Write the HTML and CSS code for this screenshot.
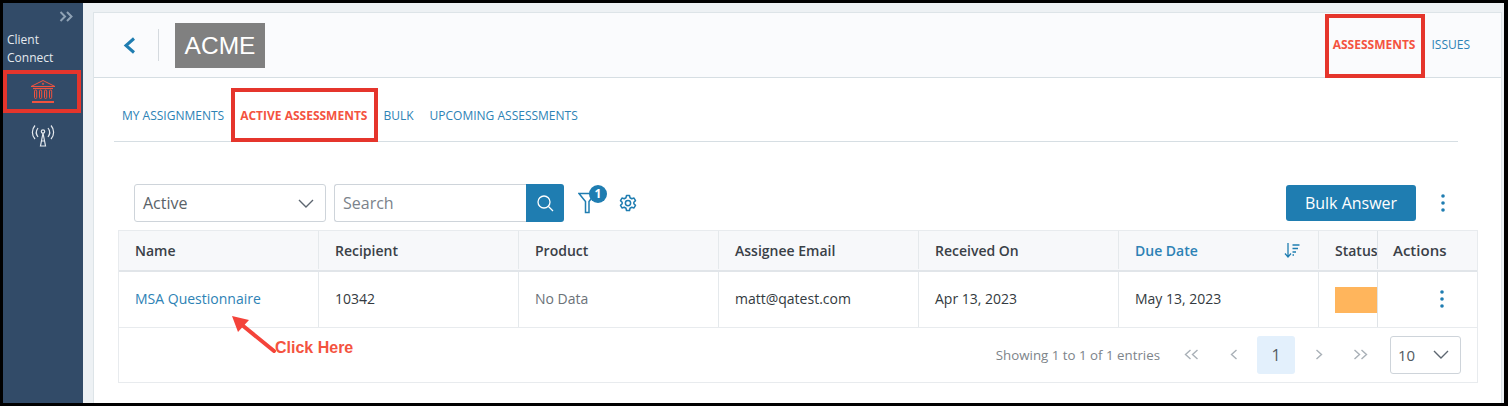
FILE: index.html
```html
<!DOCTYPE html>
<html lang="en">
<head>
<meta charset="utf-8">
<title>Client Connect</title>
<link rel="stylesheet" href="styles.css">
</head>
<body>
<div class="app">
  <aside class="sidebar">
    <div class="expand">
      <svg width="15" height="11" viewBox="0 0 15 11" fill="none" stroke="#8fa2b5" stroke-width="2"><path d="M1.500 1l4.500 4.500-4.500 4.500M8 1l4.500 4.500L8 10"/></svg>
    </div>
    <div class="brand">Client<br>Connect</div>
    <div class="side-item side-active">
      <svg width="26" height="25" viewBox="0 0 26 25" fill="none" stroke="#f0533f" stroke-width="1"><path d="M1 7.500L13 1.500l12 6z"/><circle cx="13" cy="4.800" r=".7"/><path d="M3 9.500h20" stroke-width="1.200"/><rect x="4.500" y="11" width="2.200" height="8.500" rx="1.100"/><rect x="9.500" y="11" width="2.200" height="8.500" rx="1.100"/><rect x="14.500" y="11" width="2.200" height="8.500" rx="1.100"/><rect x="19.500" y="11" width="2.200" height="8.500" rx="1.100"/><path d="M2 23h22" stroke-width="2"/></svg>
    </div>
    <div class="side-item">
      <svg width="24" height="24" viewBox="0 0 24 24" fill="none" stroke="#e4e9ee" stroke-width="1.200"><path d="M4 2.500C.500 6.500.500 12 4 16M20 2.500c3.500 4 3.500 9.500 0 13.500M7 5c-2.200 2.800-2.200 6.200 0 9M17 5c2.200 2.800 2.200 6.200 0 9M12 10L9.500 23h5zM10.500 18h3"/><circle cx="12" cy="8.500" r="1.700"/></svg>
    </div>
  </aside>
  <main class="main">
    <section class="card">
      <header class="topbar">
        <a class="back" href="#"><svg width="13" height="17" viewBox="0 0 13 17" fill="none" stroke="#1f7db1" stroke-width="3"><path d="M11 1.500L3 8.500l8 7"/></svg></a>
        <span class="vline"></span>
        <div class="logo">ACME</div>
        <nav class="topnav">
          <a class="nav-on" href="#">ASSESSMENTS</a>
          <a href="#">ISSUES</a>
        </nav>
      </header>
      <div class="content">
        <nav class="tabs">
          <a href="#">MY ASSIGNMENTS</a>
          <a class="nav-on" href="#">ACTIVE ASSESSMENTS</a>
          <a href="#">BULK</a>
          <a href="#">UPCOMING ASSESSMENTS</a>
        </nav>
        <div class="toolbar">
          <div class="select">
            <span>Active</span>
            <svg width="16" height="9" viewBox="0 0 16 9" fill="none" stroke="#5d6670" stroke-width="1.400"><path d="M1 1l7 7 7-7"/></svg>
          </div>
          <div class="search">
            <span class="search-input">Search</span>
            <span class="search-btn"><svg width="18" height="18" viewBox="0 0 18 18" fill="none" stroke="#fff" stroke-width="1.300"><circle cx="8" cy="8" r="6"/><path d="M12.500 12.500L17 17"/></svg></span>
          </div>
          <div class="filter">
            <svg width="18" height="22" viewBox="0 0 18 22" fill="none" stroke="#1f7db1" stroke-width="1.500"><path d="M1 1.500h16l-6 8V20.500H7.500V9.500z"/></svg>
            <span class="badge">1</span>
          </div>
          <svg class="gear" width="18" height="18" viewBox="0 0 24 24" fill="none" stroke="#1f7db1" stroke-width="2" stroke-linejoin="round"><circle cx="12" cy="12" r="3.500"/><path d="M10 2h4l.7 3 2.300 1.300 3-.9 2 3.400-2.200 2.100v2.200l2.200 2.100-2 3.400-3-.9-2.300 1.300-.7 3h-4l-.7-3-2.300-1.300-3 .9-2-3.400 2.200-2.100v-2.200L2 8.800l2-3.400 3 .9 2.300-1.300z"/></svg>
          <button class="bulk" type="button">Bulk Answer</button>
          <svg class="kebab" width="4" height="18" viewBox="0 0 4 18" fill="#1f7db1"><circle cx="2" cy="2" r="1.800"/><circle cx="2" cy="9" r="1.800"/><circle cx="2" cy="16" r="1.800"/></svg>
        </div>
        <div class="table">
          <div class="row head">
            <div class="cell">Name</div>
            <div class="cell">Recipient</div>
            <div class="cell">Product</div>
            <div class="cell">Assignee Email</div>
            <div class="cell">Received On</div>
            <div class="cell sorted"><span>Due Date</span>
              <svg width="16" height="16" viewBox="0 0 16 16" fill="none" stroke="#1f7db1" stroke-width="1.300"><path d="M4 1v13.500M1 11.500l3 3.500 3-3.500M8.500 3h7M8.500 6.500h5.500M8.500 10h3.500M8.500 13h1.500"/></svg>
            </div>
            <div class="cell status">Status</div>
            <div class="cell actions">Actions</div>
          </div>
          <div class="row body">
            <div class="cell"><a href="#">MSA Questionnaire</a></div>
            <div class="cell">10342</div>
            <div class="cell muted">No Data</div>
            <div class="cell">matt@qatest.com</div>
            <div class="cell">Apr 13, 2023</div>
            <div class="cell">May 13, 2023</div>
            <div class="cell status"><span class="pill"></span></div>
            <div class="cell actions action-kebab"><svg width="4" height="18" viewBox="0 0 4 18" fill="#1f7db1"><circle cx="2" cy="2" r="1.800"/><circle cx="2" cy="9" r="1.800"/><circle cx="2" cy="16" r="1.800"/></svg></div>
          </div>
          <div class="pager">
            <span class="entries">Showing 1 to 1 of 1 entries</span>
            <svg class="pg" width="15" height="11" viewBox="0 0 15 11" fill="none" stroke="#a9b0b7" stroke-width="1.400"><path d="M6.500 1L1.500 5.500l5 4.500M13.500 1l-5 4.500 5 4.500"/></svg>
            <svg class="pg pg-prev" width="8" height="11" viewBox="0 0 8 11" fill="none" stroke="#a9b0b7" stroke-width="1.400"><path d="M6.500 1l-5 4.500 5 4.500"/></svg>
            <span class="page-on">1</span>
            <svg class="pg pg-next" width="8" height="11" viewBox="0 0 8 11" fill="none" stroke="#a9b0b7" stroke-width="1.400"><path d="M1.500 1l5 4.500-5 4.500"/></svg>
            <svg class="pg pg-last" width="15" height="11" viewBox="0 0 15 11" fill="none" stroke="#a9b0b7" stroke-width="1.400"><path d="M1.500 1l5 4.500-5 4.500M8.500 1l5 4.500-5 4.500"/></svg>
            <div class="size"><span>10</span><svg width="16" height="9" viewBox="0 0 16 9" fill="none" stroke="#5d6670" stroke-width="1.400"><path d="M1 1l7 7 7-7"/></svg></div>
          </div>
        </div>
      </div>
    </section>
  </main>
  <div class="mark mark-side"></div>
  <div class="mark mark-nav"></div>
  <div class="mark mark-tab"></div>
  <svg class="arrow" width="52" height="40" viewBox="0 0 52 40"><path d="M43 36L11 10" stroke="#f4433a" stroke-width="4" stroke-linecap="round"/><path d="M1 1l17 4-11 12z" fill="#f4433a"/></svg>
  <div class="click">Click Here</div>
</div>
</body>
</html>
```

FILE: styles.css
```css
* { box-sizing: border-box; }
html, body { margin: 0; height: 100%; }
body { background: #000; padding: 3px 4px 3px 3px; overflow: hidden; font-family: "Open Sans", "Liberation Sans", sans-serif; color: #333a40; font-size: 14px; }
a { color: #2d82b5; text-decoration: none; }

.app { display: flex; height: 400px; }

.sidebar { position: relative; width: 80px; flex: none; background: #324b68; display: flex; flex-direction: column; color: #e4e9ee; }
.expand { display: flex; justify-content: flex-end; padding: 8px 9px 0 0; height: 28px; }
.brand { font-size: 12px; line-height: 18px; padding-left: 4px; height: 39px; }
.side-item { display: flex; justify-content: center; height: 43px; align-items: center; }
.side-active { color: #f0533f; }

.main { flex: 1; background: #edf1f4; padding: 9px 2px 0 10px; display: flex; min-width: 0; }
.card { flex: 1; background: #fff; border: 1px solid #dde4e8; border-bottom: 0; display: flex; flex-direction: column; min-width: 0; }

.topbar { height: 65px; background: #fafbfd; border-bottom: 1px solid #d6dee3; display: flex; align-items: center; padding: 0 31px 0 29px; flex: none; }
.back { display: flex; }
.vline { width: 1px; height: 32px; background: #d5dadf; margin: 0 16px 0 22px; }
.logo { width: 90px; height: 45px; background: #808080; color: #fff; font: 24.500px/45px "Liberation Sans", sans-serif; text-align: center; }
.topnav { margin-left: auto; display: flex; gap: 16px; font-size: 12px; margin-top: -1px; }
.nav-on { color: #f4533f; font-weight: 700; }

.content { padding: 0 20px; flex: 1; min-height: 0; position: relative; }

.tabs { display: flex; gap: 16px; height: 64px; padding: 28px 0 0 8px; font-size: 12px; line-height: 20px; border-bottom: 1px solid #d6dee3; margin-right: 23px; }

.toolbar { display: flex; align-items: center; height: 38px; margin: 42px 0 8px; padding-left: 20px; width: 1344px; }
.select { width: 192px; height: 38px; border: 1px solid #ced4da; border-radius: 3px; display: flex; align-items: center; justify-content: space-between; padding: 0 11px 0 8px; font-size: 16px; color: #5a6268; }
.search { display: flex; margin-left: 8px; height: 38px; }
.search-input { width: 192px; border: 1px solid #ced4da; border-right: 0; border-radius: 3px 0 0 3px; padding-left: 8px; font-size: 16px; line-height: 36px; color: #7b838b; }
.search-btn { width: 38px; background: #1f7db1; border-radius: 0 3px 3px 0; display: flex; align-items: center; justify-content: center; }
.filter { position: relative; margin-left: 14px; display: flex; }
.badge { position: absolute; left: 11px; top: -7px; width: 18px; height: 18px; border-radius: 50%; background: #1f7db1; color: #fff; font-size: 12px; font-weight: 700; line-height: 18px; text-align: center; }
.gear { margin-left: 23px; }
.bulk { margin-left: auto; width: 130px; height: 36px; background: #1f7db1; border: 0; border-radius: 3px; color: #fff; font: 500 16px "Open Sans", sans-serif; }
.kebab { margin: 0 13px 0 25px; }

.table { width: 1360px; border: 1px solid #e8ebee; margin-left: 4px; }
.row { display: grid; grid-template-columns: 200px 200px 200px 200px 200px 200px 59px 99px; }
.cell { display: flex; align-items: center; padding-left: 16px; border-right: 1px solid #e5e9ec; min-width: 0; white-space: nowrap; overflow: hidden; }
.cell:last-child { border-right: 0; }
.head { height: 41px; background: #f7f8fa; border-bottom: 2px solid #e1e5e9; font-weight: 600; font-size: 14px; color: #3a4047; padding-bottom: 1px; }
.sorted { color: #2d82b5; justify-content: space-between; padding-right: 18px; }
.body { height: 56px; border-bottom: 1px solid #e8ebee; }
.body .cell { padding-bottom: 2px; }
.muted { color: #6b7278; }
.actions { font-size: 15px; padding-left: 15px; box-shadow: -1px 0 0 #dfe3e7; }
.pill { display: block; width: 60px; height: 26px; margin-top: 2px; background: #ffb55c; flex: none; }
.action-kebab { padding-left: 62px; }

.pager { height: 54px; padding-bottom: 1px; display: flex; align-items: center; padding-right: 16px; justify-content: flex-end; color: #7d848a; }
.entries { font-size: 13.300px; margin-right: 24px; }
.pg-prev { margin-left: 31px; }
.page-on { width: 38px; height: 38px; background: #e3f0fc; border-radius: 3px; margin-left: 19px; font-size: 16px; line-height: 38px; text-align: center; color: #525a61; }
.pg-next { margin-left: 20px; }
.pg-last { margin-left: 30px; }
.size { width: 71px; height: 38px; border: 1px solid #ced4da; border-radius: 3px; margin-left: 22px; display: flex; align-items: center; justify-content: space-between; padding: 0 11px 0 7px; font-size: 15px; color: #525a61; }

.mark { position: absolute; border: 4px solid #e5352c; }
.mark-side { left: 3px; top: 70px; width: 78px; height: 43px; }
.mark-nav { left: 1325px; top: 14px; width: 100px; height: 64px; }
.mark-tab { left: 231px; top: 88px; width: 147px; height: 54px; }
.arrow { position: absolute; left: 231px; top: 315px; }
.click { position: absolute; left: 275px; top: 339px; font: 700 16px/18px "Liberation Sans", sans-serif; color: #f4533f; }
```
